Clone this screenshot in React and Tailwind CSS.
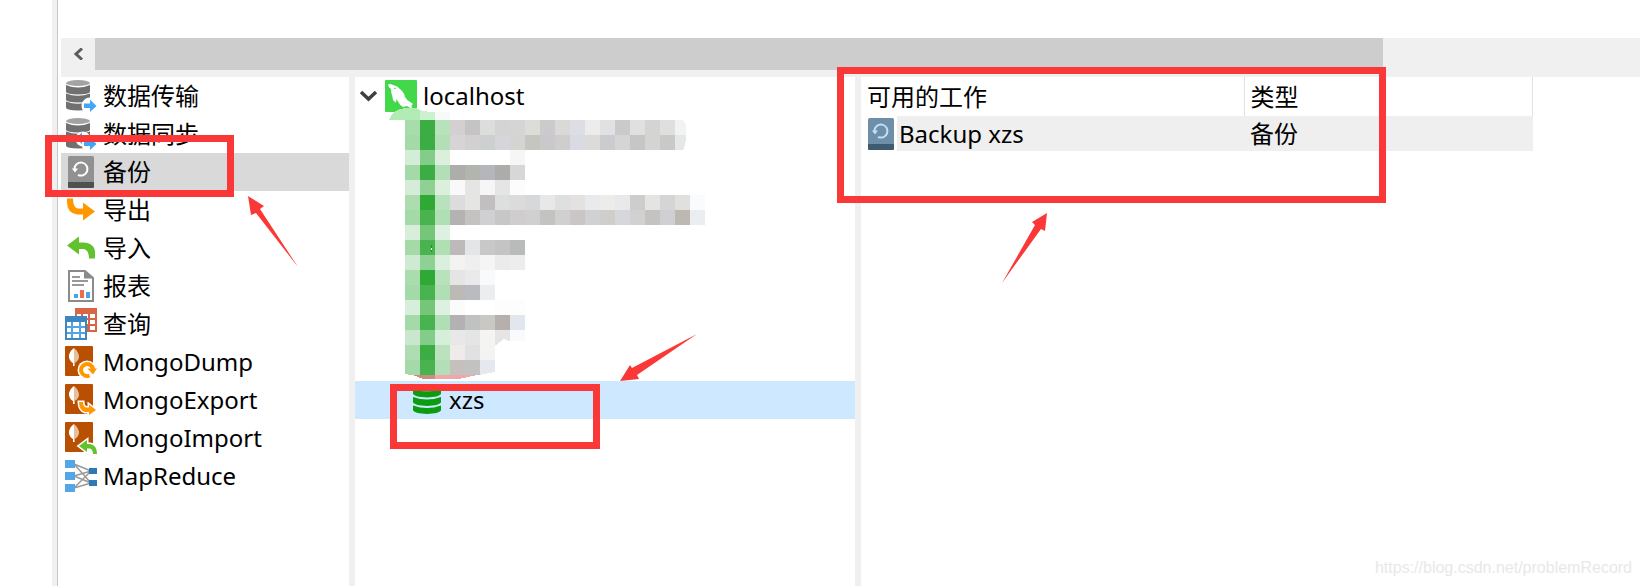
import { useState } from "react";

const DiskStack = () => (
  <>
    <ellipse cx="13" cy="3" rx="12" ry="3" fill="#a3a3a3" />
    <path
      d="M1 5 Q13 10 25 5 V12 Q24 14 13 14.500 Q2 14 1 12Z M1 13.500 Q13 18 25 13.500 V20 Q24 22 13 22.500 Q2 22 1 20Z M1 21.500 Q13 26 25 21.500 V28 Q24 30 13 30.500 Q2 30 1 28Z"
      fill="#707070"
    />
  </>
);

const TransferIcon = () => (
  <>
    <DiskStack />
    <circle cx="25" cy="26" r="8.500" fill="#fff" />
    <path d="M19 23.500 H25 V19.500 L31.500 26 L25 32 V28 H19Z" fill="#42a5f5" />
  </>
);

const SyncIcon = () => (
  <>
    <DiskStack />
    <circle cx="18" cy="21" r="7.500" fill="#fff" />
    <circle cx="25" cy="26" r="8.500" fill="#fff" />
    <path d="M11 20 L17 14.500 V26Z" fill="#42a5f5" />
    <path d="M19 23.500 H25 V19.500 L31.500 26 L25 32 V28 H19Z" fill="#42a5f5" />
  </>
);

const BackupIcon = ({ face = "#919191", base = "#505050", arrow = "#fff" }) => (
  <>
    <rect x="3" width="26" height="32" rx="1.5" fill={face} />
    <path d="M3 26 H29 V30.500 Q29 32 27.500 32 H4.500 Q3 32 3 30.500Z" fill={base} />
    <path
      d="M9.500 13 A6.500 6.500 0 1 1 13 18.800"
      fill="none"
      stroke={arrow}
      strokeWidth="2"
    />
    <path d="M6.800 12.500 H13 L10 16.500Z" fill={arrow} />
  </>
);

const ExportIcon = () => (
  <path
    d="M2 4.500 H8 Q8 13.500 13 14.500 H18 V8.500 L30 17.500 L18 26.500 V20.500 H12 Q2 19 2 8Z"
    fill="#ff9800"
  />
);

const ImportIcon = () => (
  <path
    d="M30 26.500 H24 Q24 18.500 19 17 H14 V22.500 L2 13.500 L14 4.500 V10.500 H18 Q30 11 30 21Z"
    fill="#61c22e"
  />
);

const ReportIcon = () => (
  <>
    <path d="M4 1 H20 L28 8 V31 H4Z" fill="#fff" stroke="#8a8a8a" strokeWidth="2" />
    <path d="M19 1 V8.500 H28Z" fill="#8a8a8a" />
    <path d="M7 7 H15 M7 11 H23 M7 15 H19" stroke="#999" strokeWidth="2" />
    <path d="M9 24 H13 V28 H9Z M21 22 H25 V28 H21Z" fill="#4fa3e3" />
    <path d="M15 20 H19 V28 H15Z" fill="#ee6c4d" />
  </>
);

const QueryIcon = () => (
  <>
    <rect x="10" width="22" height="24" fill="#d96547" />
    <path
      d="M12 6 H16 V10 H12Z M18 6 H23 V10 H18Z M25 6 H30 V10 H25Z M25 12 H30 V16 H25Z M25 18 H30 V22 H25Z M18 12 H23 V16 H18Z"
      fill="#fff"
    />
    <rect y="8" width="22" height="24" fill="#3d86c0" />
    <rect x="2" y="14" width="18" height="16" fill="#52a5e5" />
    <path
      d="M2 14 H6 V18 H2Z M8 14 H14 V18 H8Z M16 14 H20 V18 H16Z M2 20 H6 V24 H2Z M8 20 H14 V24 H8Z M16 20 H20 V24 H16Z M2 26 H6 V30 H2Z M8 26 H14 V30 H8Z M16 26 H20 V30 H16Z"
      fill="#fff"
    />
  </>
);

const MongoLeaf = () => (
  <>
    <rect width="28" height="30" rx="1" fill="#b94f00" />
    <path d="M9 2 Q3.500 6 4 11 Q4.500 15 8 17 V20 H9.500Z" fill="#fff" />
    <path d="M9 2 Q14 6 14 11 Q13.500 15 9.500 17 V20 H9Z" fill="#e5bfa0" />
  </>
);

const MongoDumpIcon = () => (
  <>
    <MongoLeaf />
    <circle cx="22" cy="24" r="9.500" fill="#fff" />
    <path
      d="M24.500 29.500 A6 6 0 1 1 28 23"
      fill="none"
      stroke="#ff9800"
      strokeWidth="4"
    />
    <path d="M22.500 22.500 H32 L28 28.500Z" fill="#ff9800" />
  </>
);

const MongoExportIcon = () => (
  <>
    <MongoLeaf />
    <path
      d="M14 18 H18 Q18 22.500 21 23.500 H24 V20.500 L31 26 L24 31 V28 H20 Q14 26 14 18Z"
      fill="#ff9800"
      stroke="#fff"
      strokeWidth="3"
      paintOrder="stroke"
    />
  </>
);

const MongoImportIcon = () => (
  <>
    <MongoLeaf />
    <path d="M20 26 L29 26 V31 L20 30Z" fill="#fff" />
    <path
      d="M32 32 H28 Q28 27.500 25 26.500 H22 V30 L14 24 L22 18 V22 H25 Q32 23 32 32Z"
      fill="#61c22e"
      stroke="#fff"
      strokeWidth="3"
      paintOrder="stroke"
    />
  </>
);

const MapReduceIcon = () => (
  <>
    <path
      d="M9 4 L26 11 M9 4 L26 23 M9 16 L26 11 M9 16 L26 23 M9 28 L26 11 M9 28 L26 23"
      stroke="#999"
      strokeWidth="1.500"
    />
    <path d="M0 0 H10 V8 H0Z M0 12 H10 V20 H0Z M0 24 H10 V32 H0Z" fill="#55a6e6" />
    <path d="M24 8 H32 V14 H24Z M24 20 H32 V26 H24Z" fill="#2e78b4" />
  </>
);

const DolphinIcon = () => (
  <>
    <rect width="32" height="32" rx="1" fill="#43d84a" />
    <path
      d="M3 4.500 Q5 3.500 8 5 Q12 5.500 15 9 Q19 12 20 17 Q22 21 26 22.500 L28 24 L26.500 25.500 L27 29 L22 26 L18 27 Q14.500 25 13 21.500 L11.500 19 L11 22.500 Q7.500 21 7.500 17 Q6 13 6 9 Q3 7 3 4.500Z"
      fill="#fff"
    />
    <circle cx="10" cy="8.500" r="0.800" fill="#43d84a" />
  </>
);

const DatabaseIcon = () => (
  <>
    <ellipse cx="16" cy="4" rx="14" ry="3.500" fill="#0a9d10" />
    <path
      d="M2 5 Q16 10 30 5 V10 Q28 13 16 13.500 Q4 13 2 10Z M2 13 Q16 18 30 13 V18.500 Q28 21.500 16 22 Q4 21.500 2 18.500Z M2 21.500 Q16 26.500 30 21.500 V26.500 Q28 29.500 16 30 Q4 29.500 2 26.500Z"
      fill="#0a9d10"
    />
  </>
);

const Icon = ({ children }) => (
  <svg viewBox="0 0 32 32" className="w-8 h-8 shrink-0" aria-hidden="true">
    {children}
  </svg>
);

const jobTypes = [
  { name: "数据传输", icon: <TransferIcon /> },
  { name: "数据同步", icon: <SyncIcon /> },
  { name: "备份", icon: <BackupIcon /> },
  { name: "导出", icon: <ExportIcon /> },
  { name: "导入", icon: <ImportIcon /> },
  { name: "报表", icon: <ReportIcon /> },
  { name: "查询", icon: <QueryIcon /> },
  { name: "MongoDump", icon: <MongoDumpIcon /> },
  { name: "MongoExport", icon: <MongoExportIcon /> },
  { name: "MongoImport", icon: <MongoImportIcon /> },
  { name: "MapReduce", icon: <MapReduceIcon /> },
];

// One line per 15px row of the mosaic, "-" leaves a cell empty
const mosaicRows = [
  "a9dcad 3cad43 b8e2bb d4d0d2 c4c4c4 dcdedb d4d4d4 d4d6d6 dedcd8 cbcacd d9d9d8 dddee4 ececec e1e1e1 cacaca e0e0e1 d4d4d2 dfdfe0",
  "a4d9a8 3cad43 b2dfb6 d7d4d7 d2d1d0 cdd0d0 d6d5d9 d4d4d3 c5c6c0 cac8cb d0cdcf d8dbe1 dddbd9 cbccd0 d5d5d6 c6c6c6 d6d4d2 c9c9c7",
  "d3edd6 84cc89 dcefdd - - - - f6f6f6",
  "a4d9a8 3cad43 b2dfb6 adadac b2b4ae b4b6bb acacaa d7d7d7",
  "d5edd8 8fd194 daf0dd f9f9f9 e5e5e5 f6f6f6 e5e5e5 fcfcfc",
  "acdcb0 2ea933 b8e2bb dcdcdd e5e5e4 c2bfc1 dcdfde dbdbdc d6d8da e8e8e8 dedfdf e4e2e1 e9eaec ececea e8e9eb cdcdce e4e4e3 d5d5d6 e0e0df fafbfd",
  "a4d9a8 48b34f b0dfb4 b5b2b4 c4c3c2 d0d0d3 c7c7c7 d0cdcf d0d0d1 c3c3c1 d0d0d1 cbc6c6 cfd1d3 d0cecb d5d7da d1d1d1 c4c3c1 d0d0d4 bdb8b2 eaeef1",
  "d6eeda 76c67a def1e0",
  "a4d9a8 48b34f b0dfb4 bebabc e4e5e7 c8c8c8 c4c4c4 b9bbbb",
  "ceead2 8fd194 daf0dd f4f3f1 efefef f5f5f5 ebebeb ededed",
  "aadcae 2ea933 b8e2bb e5e5e5 eaeaea f8fafc",
  "a4d9a8 48b34f b0dfb4 bdb9b4 babbc0 ecedee",
  "d6eeda 76c67a def1e0 fbfbfb - - fdfdfd fdfdfd",
  "a4d9a8 48b34f b0dfb4 b3b1b4 bfc2c1 c9c8c3 b5b0ac e2e6ef",
  "cae7cd 84cc89 d6efd8 e8e8e8 e5e5e5 f4f4f2 e6e4e4 f9fafc",
  "aedcb3 3cad43 bae3bd efebeb e0e1e3 f3f3f3",
  "a5d9aa 48b34f b3dfb7 c6c0bc c3c2c2 e5e9ef",
];

const Mosaic = () => (
  <svg
    viewBox="0 0 400 266"
    className="block w-[400px] h-[266px] overflow-visible pointer-events-none"
    shapeRendering="crispEdges"
    aria-hidden="true"
  >
    <path d="M34 5 Q37 -5 50 -7 V5Z" fill="#b0ecb3" />
    <path d="M50 -7 H61 L65 -5 V5 H50Z" fill="#b0ecb3" />
    <path d="M65 -5 L74 -3 H80 V5 H65Z" fill="#cdf0d0" />
    <path d="M80 -3 H95 V5 H80Z" fill="#f8faf8" />
    {mosaicRows.map((row, y) =>
      row
        .split(" ")
        .map((color, x) =>
          color === "-" ? null : (
            <rect
              key={`${x}-${y}`}
              x={50 + x * 15}
              y={5 + y * 15}
              width="15"
              height="15"
              fill={`#${color}`}
            />
          )
        )
    )}
    {/* Rounded ends of the brush stroke */}
    <path d="M320 5 H328 Q331 8 331 13 V20 H320Z" fill="#f1f3f3" />
    <path d="M320 20 H331 Q331 30 328 35 H320Z" fill="#e5e8e7" />
    <path d="M140 231 L149 224 L154 226 H170 V236 H140Z" fill="#fff" />
    <path d="M50 259 L60 260.500 H50Z M122 260.500 L140 257 V261 H122Z" fill="#fff" />
    <path d="M58 260 H80 V264 H68Z" fill="#c68f80" />
    <path d="M80 260 H122 L104 264 H80Z" fill="#f0a6ab" />
    <path d="M76 130 H77 V137 H76Z" fill="#0a9d10" />
    <path d="M76 133 H77 V135 H76Z" fill="#fff" />
  </svg>
);

const RedBox = ({ className }) => (
  <div
    className={`absolute border-7 border-[#fb3838] pointer-events-none ${className}`}
  />
);

const Arrows = () => (
  <svg
    className="absolute inset-0 w-full h-full pointer-events-none"
    fill="#fb3838"
    aria-hidden="true"
  >
    <path d="M248 196 L264 206 L260 209 L298 267 L256 213 L251 215Z" />
    <path d="M620 381 L630 365 L632 368 L697 334 L637 375 L639 379Z" />
    <path d="M1047 213 L1032 222 L1035 225 L1002 283 L1041 229 L1045 231Z" />
  </svg>
);

const App = () => {
  const [selectedJob, setSelectedJob] = useState("备份");

  return (
    <div className="relative flex min-h-screen overflow-hidden bg-white pl-[52px] text-2xl text-black font-['Noto_Sans','Noto_Sans_CJK_SC',sans-serif]">
      <div className="w-[6px] shrink-0 bg-[#f0f0f0] border-r border-[#c8c8c8]" />

      <div className="flex flex-1 flex-col min-w-0 pl-[3px] pt-[38px]">
        {/* Horizontal scrollbar */}
        <div className="flex h-[39px] shrink-0 items-start bg-[#f0f0f0]">
          <button
            aria-label="Scroll left"
            className="flex h-8 w-[34px] shrink-0 items-center justify-center"
          >
            <svg viewBox="0 0 10 12" className="w-[10px] h-3">
              <path
                d="M9 0.500 L3 6 L9 11.500"
                fill="none"
                stroke="#5c5c5c"
                strokeWidth="3"
              />
            </svg>
          </button>
          <div className="h-8 w-5/6 max-w-[1288px] bg-[#cdcdcd]" />
        </div>

        <div className="flex flex-1">
          {/* Job types */}
          <ul className="w-72 shrink-0">
            {jobTypes.map((job) => (
              <li key={job.name}>
                <button
                  onClick={() => setSelectedJob(job.name)}
                  className={`flex h-[38px] w-full items-center gap-1.5 pl-1 text-left ${
                    selectedJob === job.name ? "bg-[#d9d9d9]" : ""
                  }`}
                >
                  <Icon>{job.icon}</Icon>
                  {job.name}
                </button>
              </li>
            ))}
          </ul>

          {/* Connection tree */}
          <ul className="w-[512px] shrink-0 border-x-6 border-[#f0f0f0]">
            <li>
              <button className="flex h-[38px] w-full items-center gap-1.5 pl-1 text-left">
                <svg
                  viewBox="0 0 20 12"
                  className="w-5 h-3 shrink-0"
                  aria-hidden="true"
                >
                  <path
                    d="M2 2 L9.500 9 L17 2"
                    fill="none"
                    stroke="#404040"
                    strokeWidth="3.500"
                  />
                </svg>
                <Icon>
                  <DolphinIcon />
                </Icon>
                localhost
              </button>
            </li>
            <li>
              <Mosaic />
            </li>
            <li>
              <button className="flex h-[38px] w-full items-center gap-1.5 bg-[#cde8ff] pl-14 text-left">
                <Icon>
                  <DatabaseIcon />
                </Icon>
                xzs
              </button>
            </li>
          </ul>

          {/* Available jobs */}
          <div className="flex-1 min-w-0">
            <table className="w-[672px] table-fixed border-collapse text-left">
              <thead>
                <tr className="h-[39px]">
                  <th className="w-[383px] border-r border-[#e2e2e2] p-0 pl-[6px] font-normal leading-9">
                    可用的工作
                  </th>
                  <th className="border-r border-[#e2e2e2] p-0 pl-[6px] font-normal leading-9">
                    类型
                  </th>
                </tr>
              </thead>
              <tbody>
                <tr className="h-[35px]">
                  <td className="p-0">
                    <div className="flex items-center pl-1">
                      <Icon>
                        <BackupIcon face="#6f8fa8" base="#3f5b72" arrow="#bfe0fa" />
                      </Icon>
                      <span className="flex-1 bg-[#efefef] pl-[2px] leading-[35px]">
                        Backup xzs
                      </span>
                    </div>
                  </td>
                  <td className="bg-[#efefef] p-0 pl-[6px] leading-[35px]">备份</td>
                </tr>
              </tbody>
            </table>
          </div>
        </div>
      </div>

      {/* Markers drawn over the window */}
      <RedBox className="left-[45px] top-[135px] w-[189px] h-[62px]" />
      <RedBox className="left-[390px] top-[384px] w-[210px] h-[65px]" />
      <RedBox className="left-[837px] top-[67px] w-[549px] h-[136px]" />
      <Arrows />

      <a
        href="https://blog.csdn.net/problemRecord"
        className="absolute bottom-2 right-2 text-base leading-5 text-[#e8e8e8] font-['Liberation_Sans',sans-serif]"
      >
        https://blog.csdn.net/problemRecord
      </a>
    </div>
  );
};

export default App;
